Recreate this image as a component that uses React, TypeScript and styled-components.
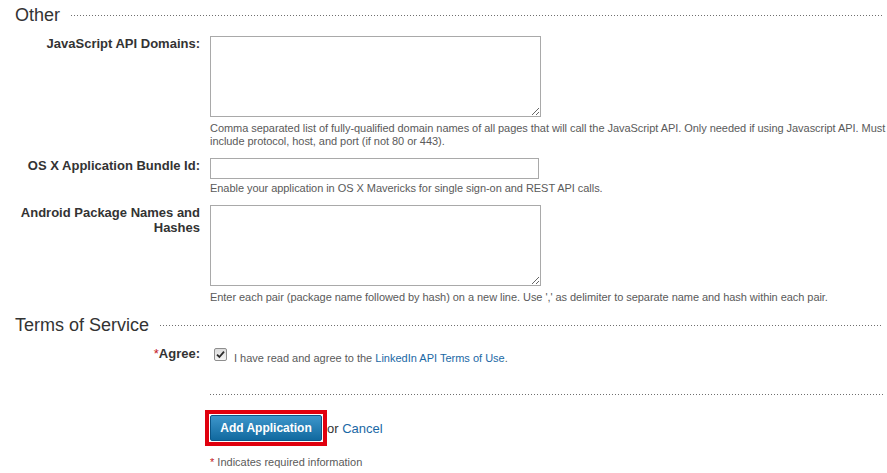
import React from "react";
import styled, { createGlobalStyle } from "styled-components";

const GlobalStyle = createGlobalStyle`
  html, body {
    margin: 0;
    padding: 0;
    background: #ffffff;
  }
  body {
    font-family: "Liberation Sans", Arial, sans-serif;
    color: #333333;
  }
`;

const Page = styled.div`
  width: 887px;
  box-sizing: border-box;
  padding: 4px 0 0 0;
`;

const Section = styled.section`
  margin-bottom: 10px;
`;

const SectionHeading = styled.div`
  display: flex;
  align-items: center;
  gap: 11px;
  padding-left: 15px;
  padding-right: 4px;
  height: 22px;
  margin-bottom: 10px;
`;

const HeadingText = styled.h2`
  margin: 0;
  font-size: 18px;
  font-weight: normal;
  line-height: 22px;
  color: #333333;
  white-space: nowrap;
`;

const Dots = styled.div`
  flex: 1;
  height: 1px;
  margin-top: 1px;
  background-image: linear-gradient(to right, #6f6f6f 1px, transparent 1px);
  background-size: 3px 1px;
  background-repeat: repeat-x;
`;

const FieldRow = styled.div<{ $last?: boolean }>`
  display: grid;
  grid-template-columns: 200px 1fr;
  column-gap: 10px;
  margin-bottom: ${(p) => (p.$last ? "0" : "10px")};
`;

const Label = styled.label`
  text-align: right;
  font-size: 13px;
  font-weight: bold;
  line-height: 15px;
  color: #333333;
`;

const Required = styled.span`
  color: #c4161c;
  font-weight: normal;
`;

const FieldCell = styled.div`
  display: flex;
  flex-direction: column;
  align-items: flex-start;
`;

const TextArea = styled.textarea`
  display: block;
  box-sizing: border-box;
  width: 331px;
  height: 81px;
  border: 1px solid #a9a9a9;
  padding: 2px;
  margin: 0 0 2px 0;
  font-family: "Liberation Sans", Arial, sans-serif;
  font-size: 13px;
  background: #ffffff;
`;

const TextInput = styled.input`
  display: block;
  box-sizing: border-box;
  width: 329px;
  height: 21px;
  border: 1px solid #a9a9a9;
  padding: 2px 3px;
  margin: 0;
  font-family: "Liberation Sans", Arial, sans-serif;
  font-size: 13px;
  background: #ffffff;
`;

const Help = styled.p`
  margin: 3px 0 0 0;
  font-size: 11px;
  line-height: 13px;
  letter-spacing: -0.05px;
  color: #5a5a5a;
`;

const CheckLine = styled.div`
  display: flex;
  align-items: flex-start;
`;

const CheckBox = styled.span`
  display: flex;
  align-items: center;
  justify-content: center;
  box-sizing: border-box;
  width: 13px;
  height: 13px;
  margin: 2px 7px 0 4px;
  border: 1px solid #8e8e8e;
  border-radius: 2px;
  background: linear-gradient(to bottom, #dcdcdc, #f4f4f4);
`;

const AgreeText = styled.span`
  margin-top: 6px;
  font-size: 11px;
  line-height: 13px;
  color: #5a5a5a;
`;

const Link = styled.a`
  color: #1a68a5;
  text-decoration: none;
`;

const Actions = styled.div`
  margin: 29px 4px 0 210px;
`;

const Divider = styled.div`
  height: 1px;
  margin-bottom: 15px;
  background-image: linear-gradient(to right, #6f6f6f 1px, transparent 1px);
  background-size: 3px 1px;
  background-repeat: repeat-x;
`;

const ButtonLine = styled.div`
  display: flex;
  align-items: center;
  margin-left: -5px;
`;

const Highlight = styled.div`
  display: inline-flex;
  border: 4px solid #e0000e;
  padding: 1px;
`;

const PrimaryButton = styled.button`
  box-sizing: border-box;
  width: 112px;
  height: 26px;
  padding: 0;
  border: 1px solid #0c5586;
  border-radius: 2px;
  background: linear-gradient(to bottom, #3d96cb, #11699f);
  color: #ffffff;
  font-family: "Liberation Sans", Arial, sans-serif;
  font-size: 12px;
  font-weight: bold;
  cursor: pointer;
`;

const OrCancel = styled.span`
  font-size: 13px;
  color: #333333;
`;

const Footnote = styled.p`
  margin: 10px 0 0 0;
  font-size: 11px;
  line-height: 13px;
  color: #5a5a5a;
`;

export default function App() {
  return (
    <>
      <GlobalStyle />
      <Page>
        <Section>
          <SectionHeading>
            <HeadingText>Other</HeadingText>
            <Dots />
          </SectionHeading>
          <FieldRow>
            <Label>JavaScript API Domains:</Label>
            <FieldCell>
              <TextArea />
              <Help>
                Comma separated list of fully-qualified domain names of all pages that will call the
                JavaScript API. Only needed if using Javascript API. Must include protocol, host, and
                port (if not 80 or 443).
              </Help>
            </FieldCell>
          </FieldRow>
          <FieldRow>
            <Label>OS X Application Bundle Id:</Label>
            <FieldCell>
              <TextInput type="text" />
              <Help>Enable your application in OS X Mavericks for single sign-on and REST API calls.</Help>
            </FieldCell>
          </FieldRow>
          <FieldRow $last>
            <Label>Android Package Names and Hashes</Label>
            <FieldCell>
              <TextArea />
              <Help>
                Enter each pair (package name followed by hash) on a new line. Use ',' as delimiter to
                separate name and hash within each pair.
              </Help>
            </FieldCell>
          </FieldRow>
        </Section>

        <Section>
          <SectionHeading>
            <HeadingText>Terms of Service</HeadingText>
            <Dots />
          </SectionHeading>
          <FieldRow $last>
            <Label>
              <Required>*</Required>Agree:
            </Label>
            <CheckLine>
              <CheckBox>
                <svg width="9" height="9" viewBox="0 0 9 9">
                  <path d="M1 4.6 L3.4 7 L8 1.6" fill="none" stroke="#2b2b2b" strokeWidth="1.8" />
                </svg>
              </CheckBox>
              <AgreeText>
                I have read and agree to the <Link href="#">LinkedIn API Terms of Use</Link>.
              </AgreeText>
            </CheckLine>
          </FieldRow>
        </Section>

        <Actions>
          <Divider />
          <ButtonLine>
            <Highlight>
              <PrimaryButton type="button">Add Application</PrimaryButton>
            </Highlight>
            <OrCancel>
              or <Link href="#">Cancel</Link>
            </OrCancel>
          </ButtonLine>
          <Footnote>
            <Required>*</Required> Indicates required information
          </Footnote>
        </Actions>
      </Page>
    </>
  );
}
